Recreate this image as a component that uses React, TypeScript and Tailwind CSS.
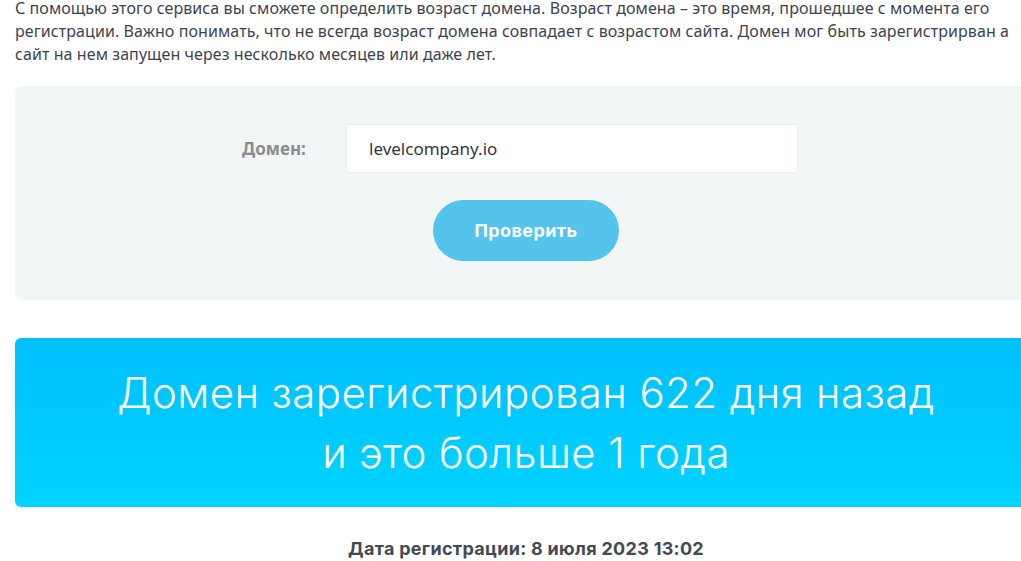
export default function App() {
  return (
    <div className="w-[1021px] h-[561px] overflow-hidden bg-white font-['Noto_Sans',sans-serif]">
      <div className="w-[1022px] ml-[15px] -mt-[3px]">
        {/* Description */}
        <p className="text-[16px] leading-[23px] tracking-[0.08px] text-[#3d4450]">
          С помощью этого сервиса вы сможете определить возраст домена. Возраст домена – это время, прошедшее с момента его
          регистрации. Важно понимать, что не всегда возраст домена совпадает с возрастом сайта. Домен мог быть зарегистрирван а
          сайт на нем запущен через несколько месяцев или даже лет.
        </p>

        {/* Form */}
        <div className="mt-[20px] rounded-md bg-[#f3f6f7] pt-[38px] pb-[39px]">
          <div className="flex items-center">
            <label className="ml-[227px] w-[104px] text-[17px] font-bold text-[#8c8c8c]">Домен:</label>
            <div className="w-[452px] h-[49px] rounded-[3px] border border-[#eceff1] bg-white flex items-center px-[22px] text-[17px] text-[#333840]">
              levelcompany.io
            </div>
          </div>
          <div className="mt-[27px] flex justify-center">
            <button className="w-[186px] h-[61px] rounded-full bg-[#55c4ec] text-white text-[18px] tracking-[0.4px] font-bold font-['Inter',sans-serif]">
              Проверить
            </button>
          </div>
        </div>

        {/* Result */}
        <div className="mt-[38px] h-[169px] rounded-md bg-gradient-to-b from-[#00bfff] to-[#00d4ff] flex flex-col items-center justify-center text-white text-[42px] leading-[60px] tracking-[0.4px] font-light font-['Inter',sans-serif]">
          <div>Домен зарегистрирован 622 дня назад</div>
          <div>и это больше 1 года</div>
        </div>

        <div className="mt-[28px] text-center text-[18px] tracking-[0.3px] font-bold text-[#444a52] font-['Inter',sans-serif]">
          Дата регистрации: 8 июля 2023 13:02
        </div>
      </div>
    </div>
  )
}
